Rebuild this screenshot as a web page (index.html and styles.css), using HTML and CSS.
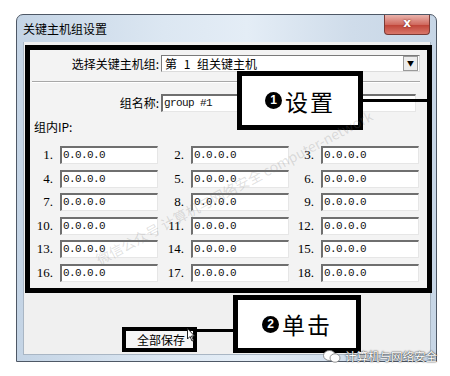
FILE: index.html
```html
<!DOCTYPE html>
<html lang="zh-CN">
<head>
<meta charset="UTF-8" />
<meta name="viewport" content="width=device-width, initial-scale=1.0"/>
<title>关键主机组设置</title>
<link rel="stylesheet" href="styles.css">
</head>
<body>
<div class="window">
  <div class="titlebar">
    <span class="title">关键主机组设置</span>
    <div class="close">x</div>
  </div>
  <div class="client">
    <div class="panel">
      <div class="row">
        <label class="row-label">选择关键主机组:</label>
        <div class="select"><span class="choice">第 1 组关键主机</span><span class="drop">&#9660;</span></div>
      </div>
      <div class="sep"></div>
      <div class="row name-row">
        <label class="row-label">组名称:</label>
        <div class="field wide">group #1</div>
      </div>
      <div class="ip-title">组内IP:</div>
      <div class="ip-grid">
        <div class="ip"><span class="num">1.</span><div class="field">0.0.0.0</div></div>
        <div class="ip"><span class="num">2.</span><div class="field">0.0.0.0</div></div>
        <div class="ip"><span class="num">3.</span><div class="field">0.0.0.0</div></div>
        <div class="ip"><span class="num">4.</span><div class="field">0.0.0.0</div></div>
        <div class="ip"><span class="num">5.</span><div class="field">0.0.0.0</div></div>
        <div class="ip"><span class="num">6.</span><div class="field">0.0.0.0</div></div>
        <div class="ip"><span class="num">7.</span><div class="field">0.0.0.0</div></div>
        <div class="ip"><span class="num">8.</span><div class="field">0.0.0.0</div></div>
        <div class="ip"><span class="num">9.</span><div class="field">0.0.0.0</div></div>
        <div class="ip"><span class="num">10.</span><div class="field">0.0.0.0</div></div>
        <div class="ip"><span class="num">11.</span><div class="field">0.0.0.0</div></div>
        <div class="ip"><span class="num">12.</span><div class="field">0.0.0.0</div></div>
        <div class="ip"><span class="num">13.</span><div class="field">0.0.0.0</div></div>
        <div class="ip"><span class="num">14.</span><div class="field">0.0.0.0</div></div>
        <div class="ip"><span class="num">15.</span><div class="field">0.0.0.0</div></div>
        <div class="ip"><span class="num">16.</span><div class="field">0.0.0.0</div></div>
        <div class="ip"><span class="num">17.</span><div class="field">0.0.0.0</div></div>
        <div class="ip"><span class="num">18.</span><div class="field">0.0.0.0</div></div>
      </div>
    </div>
    <div class="footer">
      <div class="save-mark"><div class="save">全部保存</div></div>
    </div>
  </div>
</div>

<!-- annotations drawn over the screenshot -->
<div class="callout callout-1"><span class="badge">1</span>设置</div>
<div class="leader leader-1"></div>
<div class="callout callout-2"><span class="badge">2</span>单击</div>
<div class="leader leader-2"></div>
<svg class="cursor" width="8" height="14" viewBox="0 0 8 14">
  <path d="M0.5 0.5 L0.5 11 L3 8.5 L5 13 L6.5 12.3 L4.5 8 L7.5 8 Z" fill="#fff" stroke="#222" stroke-width="1"/>
</svg>

<div class="stamp">微信公众号 计算机与网络安全 computer-network</div>
<div class="brand">
  <svg width="18" height="13" viewBox="0 0 18 13">
    <ellipse cx="6.5" cy="5.5" rx="6" ry="5" fill="#fff" stroke="#777" stroke-width="0.8"/>
    <ellipse cx="12" cy="8" rx="5" ry="4.2" fill="#fff" stroke="#777" stroke-width="0.8"/>
  </svg>
  <span>计算机与网络安全</span>
</div>
</body>
</html>
```

FILE: styles.css
```css
body {
  margin: 0;
  padding: 14px 0 0 16px;
  background: #fff;
  font-family: "Noto Sans CJK SC", sans-serif;
  font-size: 12px;
  color: #000;
}

.window {
  width: 419px;
  height: 346px;
  border: 1px solid #4e5866;
  border-radius: 7px 7px 0 0;
  background: linear-gradient(90deg, #c4d4e5 0%, #dce7f2 35%, #e4edf6 55%, #cfdcea 80%, #c7d6e6 100%);
  display: flex;
  flex-direction: column;
}

.titlebar {
  height: 27px;
  display: flex;
  justify-content: space-between;
  align-items: flex-start;
  padding-left: 6px;
}

.title {
  line-height: 27px;
  font-size: 12px;
}

.close {
  width: 44px;
  height: 19px;
  margin-right: 6px;
  border: 1px solid #7a3b36;
  border-top: none;
  border-radius: 0 0 4px 4px;
  background: linear-gradient(#eab3ac, #d06a5f 50%, #c0463a 55%, #d9776a);
  color: #fff;
  font-family: "DejaVu Sans", sans-serif;
  font-weight: bold;
  font-size: 12px;
  text-align: center;
  line-height: 17px;
  text-shadow: 0 0 2px #6a1a14;
}

.client {
  flex: 1;
  margin: 0 5px 6px 6px;
  background: #f0f0f0;
  border: 1px solid #a9b6c4;
  border-top: none;
}

.panel {
  width: 397px;
  height: 233px;
  margin: 3px -1px 0 1px;
  border: 5px solid #000;
  background: #f3f3f3;
  padding-top: 5px;
  box-sizing: content-box;
}

.row {
  display: flex;
  align-items: center;
  height: 17px;
}

.row-label {
  width: 129px;
  padding-right: 2px;
  text-align: right;
  font-size: 12px;
}

.select {
  width: 254px;
  height: 15px;
  border: 1px solid #7a7a7a;
  border-right-color: #dcdcdc;
  border-bottom-color: #dcdcdc;
  background: #fff;
  display: flex;
  justify-content: space-between;
  align-items: center;
  padding-left: 3px;
  box-sizing: content-box;
  font-size: 12px;
}

.choice {
  word-spacing: 4px;
}

.drop {
  width: 13px;
  height: 13px;
  margin-right: 1px;
  border: 1px solid #9a9a9a;
  background: #ececec;
  font-size: 7px;
  text-align: center;
  line-height: 13px;
}

.sep {
  width: 388px;
  height: 1px;
  margin: 9px 0 0 2px;
  background: #a8a8a8;
  border-bottom: 1px solid #fff;
}

.name-row {
  margin-top: 11px;
}

.field {
  width: 94px;
  height: 15px;
  border: 1px solid #e6e6e6;
  border-top: 2px solid #6f6f6f;
  border-left: 2px solid #6f6f6f;
  background: #fff;
  padding-left: 1px;
  box-sizing: content-box;
  font-family: "Liberation Mono", monospace;
  font-size: 11px;
  letter-spacing: -0.6px;
  line-height: 15px;
  color: #111;
}

.field.wide {
  width: 251px;
}

.ip-title {
  margin: 8px 0 0 4px;
  line-height: 15px;
  font-size: 12px;
}

.ip-grid {
  display: grid;
  grid-template-columns: 131px 130px 130px;
  row-gap: 5.6px;
  margin-top: 12px;
}

.ip {
  display: flex;
  align-items: center;
}

.num {
  width: 23px;
  margin-right: 7px;
  text-align: right;
  font-family: "Liberation Serif", serif;
  font-size: 13px;
}

.footer {
  padding: 34px 0 0 98px;
}

.save-mark {
  width: 67px;
  height: 17px;
  border: 4px solid #000;
  background: #e8e8e8;
}

.save {
  height: 17px;
  line-height: 17px;
  padding-left: 11px;
  background: #f6f6f6;
  font-size: 12px;
}

.callout {
  position: absolute;
  background: #fff;
  border: 5px solid #000;
  display: flex;
  align-items: center;
  justify-content: center;
  font-size: 23px;
  letter-spacing: 2px;
}

.badge {
  width: 17px;
  height: 17px;
  border-radius: 50%;
  margin-right: 3px;
  background: #000;
  color: #fff;
  font-family: "Liberation Sans", sans-serif;
  font-weight: bold;
  font-size: 12px;
  letter-spacing: 0;
  line-height: 17px;
  text-align: center;
}

.callout-1 {
  left: 237px;
  top: 71px;
  width: 116px;
  height: 49px;
}

.callout-2 {
  left: 233px;
  top: 295px;
  width: 118px;
  height: 48px;
}

.leader {
  position: absolute;
  height: 3px;
  background: #000;
}

.leader-1 {
  left: 363px;
  top: 99px;
  width: 64px;
}

.leader-2 {
  left: 197px;
  top: 329px;
  width: 36px;
}

.cursor {
  position: absolute;
  left: 187px;
  top: 328px;
}

.stamp {
  position: absolute;
  left: 80px;
  top: 182px;
  width: 290px;
  transform: rotate(-28deg);
  color: rgba(120, 120, 120, 0.22);
  font-size: 14px;
  white-space: nowrap;
}

.brand {
  position: absolute;
  left: 323px;
  top: 348px;
  display: flex;
  align-items: center;
  gap: 4px;
  color: #fff;
  font-size: 11.5px;
  text-shadow: 0 0 2px #333, 0 0 1px #333;
}
```
